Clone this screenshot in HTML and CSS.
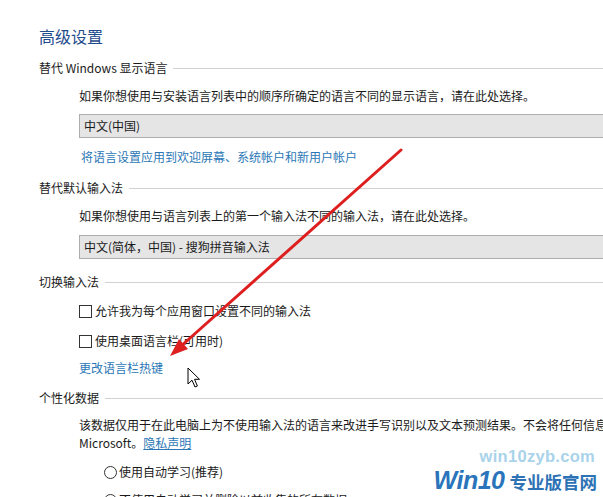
FILE: index.html
```html
<!DOCTYPE html>
<html lang="zh-CN">
<head>
<meta charset="utf-8">
<title>高级设置</title>
<link rel="stylesheet" href="styles.css">
</head>
<body>
<div class="page">
  <h1 class="title">高级设置</h1>

  <div class="section-head sh1"><span>替代 Windows 显示语言</span><i class="rule"></i></div>
  <p class="desc d1">如果你想使用与安装语言列表中的顺序所确定的语言不同的显示语言，请在此处选择。</p>
  <div class="select s1">中文(中国)</div>
  <a class="link l1">将语言设置应用到欢迎屏幕、系统帐户和新用户帐户</a>

  <div class="section-head sh2"><span>替代默认输入法</span><i class="rule"></i></div>
  <p class="desc d2">如果你想使用与语言列表上的第一个输入法不同的输入法，请在此处选择。</p>
  <div class="select s2">中文(简体，中国) - 搜狗拼音输入法</div>

  <div class="section-head sh3"><span>切换输入法</span><i class="rule"></i></div>
  <label class="check c1"><span class="box"></span>允许我为每个应用窗口设置不同的输入法</label>
  <label class="check c2"><span class="box"></span>使用桌面语言栏(可用时)</label>
  <a class="link l2">更改语言栏热键</a>

  <div class="section-head sh4"><span>个性化数据</span><i class="rule"></i></div>
  <p class="desc d4">该数据仅用于在此电脑上为不使用输入法的语言来改进手写识别以及文本预测结果。不会将任何信息发送到<br>Microsoft。<a class="underline">隐私声明</a></p>
  <label class="radio r1"><span class="circle"></span>使用自动学习(推荐)</label>
  <label class="radio r2"><span class="circle"></span>不使用自动学习并删除以前收集的所有数据</label>
</div>

<svg class="arrow" width="603" height="497" viewBox="0 0 603 497">
  <line x1="401" y1="150" x2="180" y2="347" stroke="#dd1f1f" stroke-width="3" stroke-linecap="round"/>
  <polygon points="170,356 188,349 179,339" fill="#dd1f1f"/>
</svg>

<svg class="cursor" width="14" height="22" viewBox="0 0 14 22">
  <path d="M1 1 L1 17 L5 13.2 L8 20 L10.4 19 L7.5 12.3 L12.5 12.3 Z" fill="#fff" stroke="#000" stroke-width="1" stroke-linejoin="miter"/>
</svg>

<div class="watermark">
  <div class="wm-url">win10zyb.com</div>
  <div class="wm-brand"><span class="wm-win">Win10</span><span class="wm-cn">专业版官网</span></div>
</div>
</body>
</html>
```
FILE: styles.css
```css
html, body {
  margin: 0;
  padding: 0;
  background: #ffffff;
}
body {
  width: 603px;
  height: 497px;
  overflow: hidden;
  position: relative;
  font-family: "Microsoft YaHei", "Noto Sans CJK SC", "Noto Sans", sans-serif;
  font-size: 12px;
  color: #1a1a1a;
}
.page {
  padding-left: 39px;
  display: flex;
  flex-direction: column;
  align-items: flex-start;
}
.title {
  margin: 26px 0 0;
  font-size: 16px;
  line-height: 20px;
  font-weight: normal;
  color: #1f4c8c;
}
.section-head {
  align-self: stretch;
  display: flex;
  align-items: center;
  height: 18px;
  line-height: 18px;
}
.section-head .rule {
  flex: 1;
  height: 1px;
  background: #d2d2d2;
  margin-left: 6px;
}
.sh1 { margin-top: 13px; }
.sh2 { margin-top: 13px; }
.sh3 { margin-top: 14px; }
.sh4 { margin-top: 12px; }

.desc {
  margin: 10px 0 0 40px;
  line-height: 18px;
  white-space: nowrap;
}
.d4 { margin-top: 9px; }

.select {
  margin: 9px 0 0 40px;
  box-sizing: border-box;
  width: 600px;
  height: 24px;
  line-height: 22px;
  padding-left: 4px;
  background: #e5e5e5;
  border: 1px solid #adadad;
  white-space: nowrap;
}
.s2 { margin-top: 10px; }

.link {
  line-height: 18px;
  color: #2b77b6;
  white-space: nowrap;
}
.l1 { margin: 10px 0 0 42px; }
.l2 { margin: 9px 0 0 40px; }
.underline {
  color: #2b77b6;
  text-decoration: underline;
}

.check {
  display: flex;
  align-items: center;
  line-height: 18px;
  margin-left: 40px;
  white-space: nowrap;
}
.c1 { margin-top: 11px; }
.c2 { margin-top: 12px; }
.box {
  box-sizing: border-box;
  width: 13px;
  height: 13px;
  border: 1px solid #333333;
  background: #fff;
  margin-right: 3px;
}

.radio {
  display: flex;
  align-items: center;
  line-height: 18px;
  margin-left: 65px;
  white-space: nowrap;
}
.r1 { margin-top: 11px; }
.r2 { margin-top: 10px; }
.circle {
  box-sizing: border-box;
  width: 13px;
  height: 13px;
  border: 1px solid #333333;
  border-radius: 50%;
  margin-right: 2px;
}

.arrow {
  position: absolute;
  left: 0;
  top: 0;
  pointer-events: none;
}
.cursor {
  position: absolute;
  left: 187px;
  top: 367px;
}

.watermark {
  position: absolute;
  left: 420px;
  top: 447px;
  width: 183px;
  display: flex;
  flex-direction: column;
  align-items: flex-end;
}
.wm-url {
  font-family: "Liberation Sans", Arial, sans-serif;
  font-weight: bold;
  font-size: 16.5px;
  line-height: 18px;
  color: #a9d3ea;
  margin-right: 8px;
  letter-spacing: 0.3px;
}
.wm-brand {
  display: flex;
  align-items: baseline;
  margin-top: 3px;
  margin-right: 6px;
  line-height: 25px;
}
.wm-win {
  font-family: "Liberation Sans", Arial, sans-serif;
  font-weight: bold;
  font-style: italic;
  font-size: 25px;
  color: #2a74bb;
  letter-spacing: -0.5px;
}
.wm-cn {
  font-weight: bold;
  font-size: 17.5px;
  color: #2c72b5;
  margin-left: 5px;
}
```
